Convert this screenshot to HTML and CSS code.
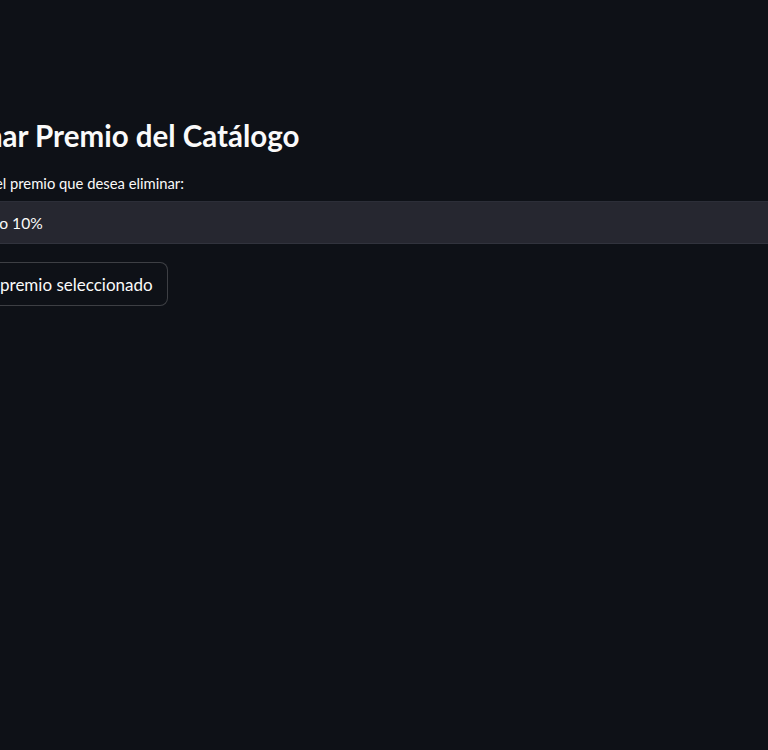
FILE: index.html
```html
<!DOCTYPE html>
<html lang="es">
<head>
<meta charset="utf-8">
<link rel="stylesheet" href="styles.css">
</head>
<body>
<div class="main">
  <h2 class="title">Eliminar Premio del Catálogo</h2>
  <div class="field">
    <label class="label">Seleccione el premio que desea eliminar:</label>
    <div class="select"><span class="select-value">Descuento 10%</span></div>
  </div>
  <button class="btn">Eliminar premio seleccionado</button>
</div>
</body>
</html>
```
FILE: styles.css
```css
html, body {
  margin: 0;
  padding: 0;
  background: #0e1117;
  overflow: hidden;
  height: 750px;
}
body {
  font-family: "Lato", "Noto Sans", sans-serif;
  color: #fafafa;
}
.main {
  margin-left: -78px;
  width: 1000px;
  padding-top: 114px;
  display: flex;
  flex-direction: column;
  align-items: flex-start;
}
.title {
  margin: 0;
  font-size: 29.5px;
  font-weight: 700;
  line-height: 44px;
}
.field {
  margin-top: 15px;
  width: 100%;
}
.label {
  display: block;
  font-size: 14.8px;
  line-height: 20px;
  margin-bottom: 8px;
}
.select {
  background: #262730;
  height: 43px;
  border-bottom: 1px solid #31333d;
  border-top: 1px solid #2c2e38;
  box-sizing: border-box;
  display: flex;
  align-items: center;
  padding-left: 12px;
  border-radius: 8px;
}
.select-value {
  font-size: 15.6px;
}
.btn {
  margin-top: 18px;
  background: #0e1117;
  color: #fafafa;
  border: 1px solid rgba(250,250,250,0.2);
  border-radius: 8px;
  font-family: inherit;
  font-size: 17px;
  height: 44px;
  padding: 0 14px 0 13px;
}
```
